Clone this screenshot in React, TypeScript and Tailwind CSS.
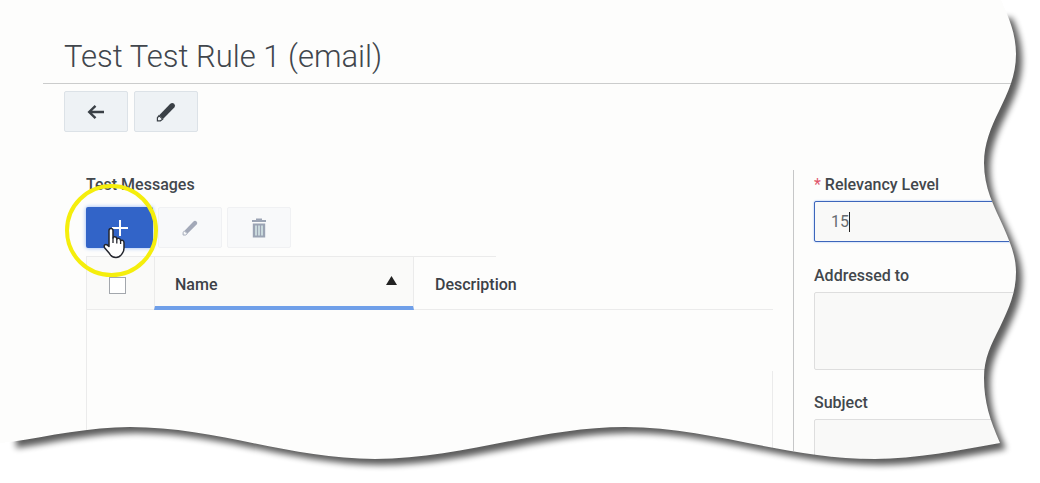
import React from "react";

function BackIcon() {
  return (
    <svg width="18" height="16" viewBox="0 0 18 16" fill="none" stroke="#3a4046" strokeWidth="2.4" aria-hidden="true">
      <path d="M17 8H2.500M8.500 1.800L2.200 8L8.500 14.200" />
    </svg>
  );
}

function PencilIcon({ size, color }: { size: number; color: string }) {
  return (
    <svg width={size} height={size} viewBox="0 0 20 20" aria-hidden="true">
      <path d="M3.2 13.300L14.300 1.800Q16.200 0 18.200 1.800Q20 3.700 18.300 5.600L7 16.900Z" fill={color} />
      <path d="M3 13.600L6.600 17.200L4.400 18.800H1.400V15.800Z" fill="none" stroke={color} strokeWidth="1.2" />
    </svg>
  );
}

function TrashIcon() {
  return (
    <svg width="16" height="20" viewBox="0 0 16 20" aria-hidden="true">
      <path d="M1 3H15M5 1.5H11" stroke="#9ba4b4" strokeWidth="2" />
      <path d="M1.800 5.500H14.200V19.500H1.800Z" fill="#9ba4b4" />
      <path d="M5 7.500V17.500M8 7.500V17.500M11 7.500V17.500" stroke="#dcefed" strokeWidth="1.4" />
    </svg>
  );
}

function HandCursor() {
  return (
    <svg width="24" height="32" viewBox="0 0 24 32" aria-hidden="true">
      <path
        d="M6 3.5Q6 1.5 8 1.5Q10 1.5 10 3.5V11Q10.5 9.5 12 9.8Q13.7 10 13.8 12Q14.6 11 16 11.4Q17.4 11.8 17.6 13.6Q18.5 12.8 19.8 13.4Q21 14 21 15.8V21Q21 24 19.5 26Q17 30.5 13 30.5Q8.500 30.5 6.500 26.500L1.800 21Q0.600 19 1.800 17.800Q3.500 16.600 6 19.500Z"
        fill="#fff"
        stroke="#24262e"
        strokeWidth="1.5"
        strokeLinejoin="round"
      />
      <path d="M10 10.500V16M13.800 12V16.500M17.600 13.600V17" stroke="#24262e" strokeWidth="1.300" />
    </svg>
  );
}

const EDGE =
  "L1001 0C1009 18 1016 34 1016 54C1016 76 1008 92 999 111C991 127 984 144 984 163C984 188 994 206 1003 226C1010 242 1016 256 1016 272C1016 293 1009 308 1000 327C991 345 984 358 984 378C984 402 990 420 1000 443C960 450 915 459 875 459C785 459 710 427 625 427C540 427 460 459 375 459C290 459 215 427 130 427C90 427 50 436 10 442";

function TornEdge() {
  return (
    <svg
      className="pointer-events-none absolute inset-0 h-full w-full"
      viewBox="0 0 1040 483"
      preserveAspectRatio="none"
      aria-hidden="true"
    >
      <defs>
        <filter id="soft" x="-10%" y="-10%" width="120%" height="120%">
          <feGaussianBlur stdDeviation="3" />
        </filter>
        <clipPath id="outside">
          <path d={"M1040 0" + EDGE + "L0 443V483H1040Z"} />
        </clipPath>
      </defs>
      <path d={"M1040 0" + EDGE + "L0 443V483H1040Z"} fill="#fff" shapeRendering="crispEdges" />
      <g clipPath="url(#outside)">
        <path d={"M18 18" + EDGE.replace("L1001 0", "L1006 12") + "Z"} transform="translate(6 6)" fill="#000" opacity="0.64" filter="url(#soft)" />
      </g>
    </svg>
  );
}

const toolButton = "flex h-[41px] w-16 items-center justify-center rounded-xs border";
const labelText = "block text-[16px] leading-5 font-medium";

export default function App() {
  return (
    <main className="relative min-h-screen overflow-hidden bg-[#fdfdfc] font-[Roboto,sans-serif] text-[#42474c]">
      <header className="ml-[43px] border-b border-[#cbcccc] pt-[37px] pb-1.5 pl-[21px]">
        <h1 className="text-[31px] leading-10 font-light text-[#41464c]">Test Test Rule 1 (email)</h1>
      </header>
      <nav className="flex gap-1.5 pt-[7px] pl-16" aria-label="Rule actions">
        <button type="button" aria-label="Back" className={`${toolButton} border-[#dce2e7] bg-[#eef2f5]`}>
          <BackIcon />
        </button>
        <button type="button" aria-label="Edit rule" className={`${toolButton} border-[#dce2e7] bg-[#eef2f5]`}>
          <PencilIcon size={20} color="#3a4046" />
        </button>
      </nav>

      <div className="mt-[38px] grid grid-cols-[minmax(0,1fr)_247px]">
        <section className="flex flex-col pt-[5px] pr-5 pl-[86px]">
          <h2 className={labelText}>Test Messages</h2>
          <div className="mt-3 flex gap-[5px]">
            <div className="relative">
              <button
                type="button"
                aria-label="Add message"
                className="flex h-[41px] w-[67px] items-center justify-center rounded-xs bg-[#3264c8] shadow-[0_0_4px_#8fb5f5]"
              >
                <svg width="18" height="18" viewBox="0 0 18 18" stroke="#fff" strokeWidth="2" aria-hidden="true">
                  <path d="M9 1V17M1 9H17" />
                </svg>
              </button>
              <svg className="pointer-events-none absolute -top-6 -left-6 z-10" width="98" height="98" viewBox="0 0 98 98" aria-hidden="true">
                <circle cx="49.500" cy="47.500" r="44.500" fill="none" stroke="#f5ee0c" strokeWidth="4" />
              </svg>
              <div className="pointer-events-none absolute top-5 left-[17px] z-10">
                <HandCursor />
              </div>
            </div>
            <button type="button" disabled aria-label="Edit message" className={`${toolButton} border-[#f0f1f3] bg-[#f8f9fa]`}>
              <PencilIcon size={16} color="#a3a9b8" />
            </button>
            <button type="button" disabled aria-label="Delete message" className={`${toolButton} border-[#f0f1f3] bg-[#f8f9fa]`}>
              <TrashIcon />
            </button>
          </div>
          <div className="mt-2 flex-1 border-l border-[#ebebeb]">
            <table className="w-full table-fixed border-separate border-spacing-0 text-left text-[16px] leading-5 text-[#3c4147]">
              <thead>
                <tr className="h-[54px]">
                  <th className="w-[67px] border-t border-b border-[#ebebeb] bg-[#fafaf9] p-0">
                    <input
                      type="checkbox"
                      aria-label="Select all messages"
                      className="mt-1 ml-[22px] block size-[17px] appearance-none border border-[#a3a7ad] bg-white"
                    />
                  </th>
                  <th aria-sort="ascending" className="w-[260px] border-t border-r border-b-4 border-l border-[#ebebeb] border-b-[#6f9fe9] bg-[#fafaf9] px-5 pt-1.5 pb-0 font-medium">
                    <div className="flex items-center justify-between">
                      <span>Name</span>
                      <svg className="-mt-2 -mr-1" width="11" height="9" viewBox="0 0 11 9" aria-hidden="true">
                        <path d="M5.500 0L11 9H0Z" fill="#222" />
                      </svg>
                    </div>
                  </th>
                  <th className="border-b border-[#ebebeb] bg-[linear-gradient(#ebebeb,#ebebeb)] bg-[length:82px_1px] bg-no-repeat px-[21px] pt-1 pb-0 font-medium">Description</th>
                </tr>
              </thead>
            </table>
            <div className="mt-[61px] h-[111px] border-r border-[#ebebeb]" />
          </div>
        </section>

        <aside className="border-l border-[#c6c7c8] pt-[5px] pl-5">
          <label htmlFor="relevancy" className={labelText}>
            <span className="font-normal text-[#e0566b]">*</span> Relevancy Level
          </label>
          <div className="mt-1.5 flex h-[41px] items-center rounded-xs border border-[#3d66bb] bg-[#f9f9f8] pt-px pl-4 shadow-[0_0_2px_#8fb5f5]">
            <input
              id="relevancy"
              type="text"
              defaultValue="15"
              className="min-w-0 bg-transparent p-0 text-[16px] leading-5 text-[#666b70] outline-none [field-sizing:content]"
            />
            <span className="h-5 w-px bg-[#222]" />
          </div>
          <label htmlFor="addressed" className={`${labelText} mt-6`}>
            Addressed to
          </label>
          <textarea id="addressed" className="mt-1.5 block h-[78px] w-full resize-none rounded-xs border border-[#dedede] bg-[#f9f9f8]" />
          <label htmlFor="subject" className={`${labelText} mt-[23px]`}>
            Subject
          </label>
          <textarea id="subject" className="mt-1.5 block h-14 w-full resize-none rounded-xs border border-[#dedede] bg-[#f9f9f8]" />
        </aside>
      </div>
      <TornEdge />
    </main>
  );
}
